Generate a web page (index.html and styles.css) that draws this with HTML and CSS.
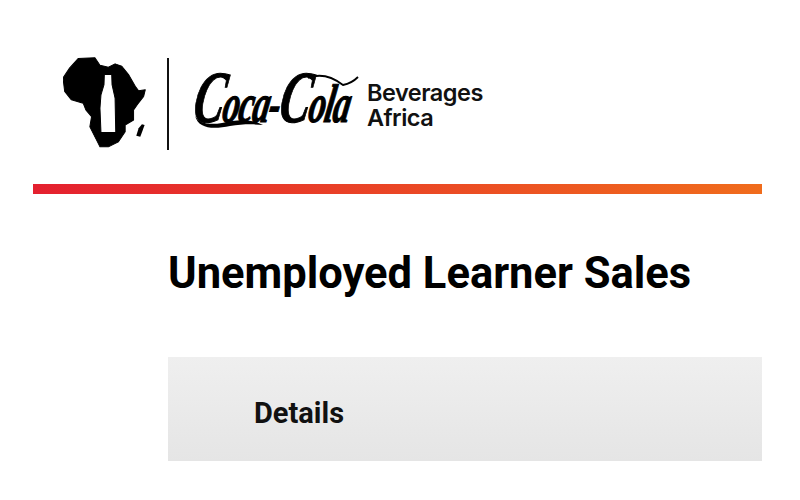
FILE: index.html
```html
<!DOCTYPE html>
<html>
	<head>
		<meta charset="utf-8" />
		<title>Unemployed Learner Sales</title>
		<link rel="stylesheet" href="styles.css">
	</head>
	<body>
		<div id="container">
			<div id="top">
				<svg class="africa" viewBox="40 38 250 270" width="84" height="91">
					<path fill="#000" stroke="#000" stroke-width="3" stroke-linejoin="round" fill-rule="evenodd" d="M85 42L135 40L150 62L175 68L195 58L215 65L235 90L255 125L265 138L285 135L280 155L262 178L250 195L250 225L225 240L225 260L205 290L175 305L150 305L140 285L120 245L125 215L108 195L100 175L65 165L45 140L40 100L60 70ZM163 90L185 90L186 120L195 160L197 262L153 262L150 190L153 150L162 120Z"/>
					<path fill="#000" d="M275 238L283 240L270 275L258 272L265 250Z"/>
				</svg>
				<div class="line"></div>
				<svg class="coke" viewBox="0 0 170 72" width="170" height="72">
					<text class="coke-word" transform="translate(1 62) skewX(-10) scale(1 1.6)"><tspan class="coke-cap">C</tspan>oca-<tspan class="coke-cap">C</tspan>ola</text>
					<path fill="#000" d="M5 55C8 64 20 65 32 63C45 60 60 58 73 65C64 64 52 64 40 66C25 69 8 70 5 55Z"/>
					<path fill="none" stroke="#000" stroke-width="1.8" d="M118 18C128 14 140 15 153 25C158 24 164 21 168 17"/>
				</svg>
				<div class="brand">Beverages<br/>Africa</div>
			</div>
			<div class="bar"></div>
			<div id="main">
				<h1>Unemployed Learner Sales</h1>
				<div class="panel">Details</div>
			</div>
		</div>
	</body>
</html>
```

FILE: styles.css
```css
*{margin:0;padding:0}
body{font-family:Roboto,"Liberation Sans",sans-serif;background:#fff;color:#000;}
#container{width:729px;margin-left:33px;}
#top{height:127px;padding:57px 0 0 30px;display:flex;align-items:flex-start;}
.africa{display:block;flex:none;}
.line{width:2px;height:92px;background:#111;margin:1px 0 0 20px;flex:none;}
.coke{display:block;flex:none;margin:3px 0 0 21px;overflow:visible;}
.coke-word{font-family:"Liberation Serif",serif;font-style:italic;font-weight:bold;font-size:34px;letter-spacing:-1px;fill:#000;stroke:#000;stroke-width:.7px;}
.coke-cap{font-size:46px;}
.brand{font-family:Inter,sans-serif;font-weight:600;font-size:23.5px;line-height:25px;letter-spacing:-0.5px;color:#111;margin:23px 0 0 7px;}
.bar{height:10px;background:linear-gradient(to right,#e4202f,#f06c1c);}
#main{padding:57px 0 0 135px;}
h1{font-size:43.5px;line-height:46px;font-weight:700;color:#000;}
.panel{margin-top:60px;height:104px;line-height:112px;padding-left:86px;font-size:29px;font-weight:700;color:#111;background:linear-gradient(to bottom,#efefef,#e5e5e5);}
```
